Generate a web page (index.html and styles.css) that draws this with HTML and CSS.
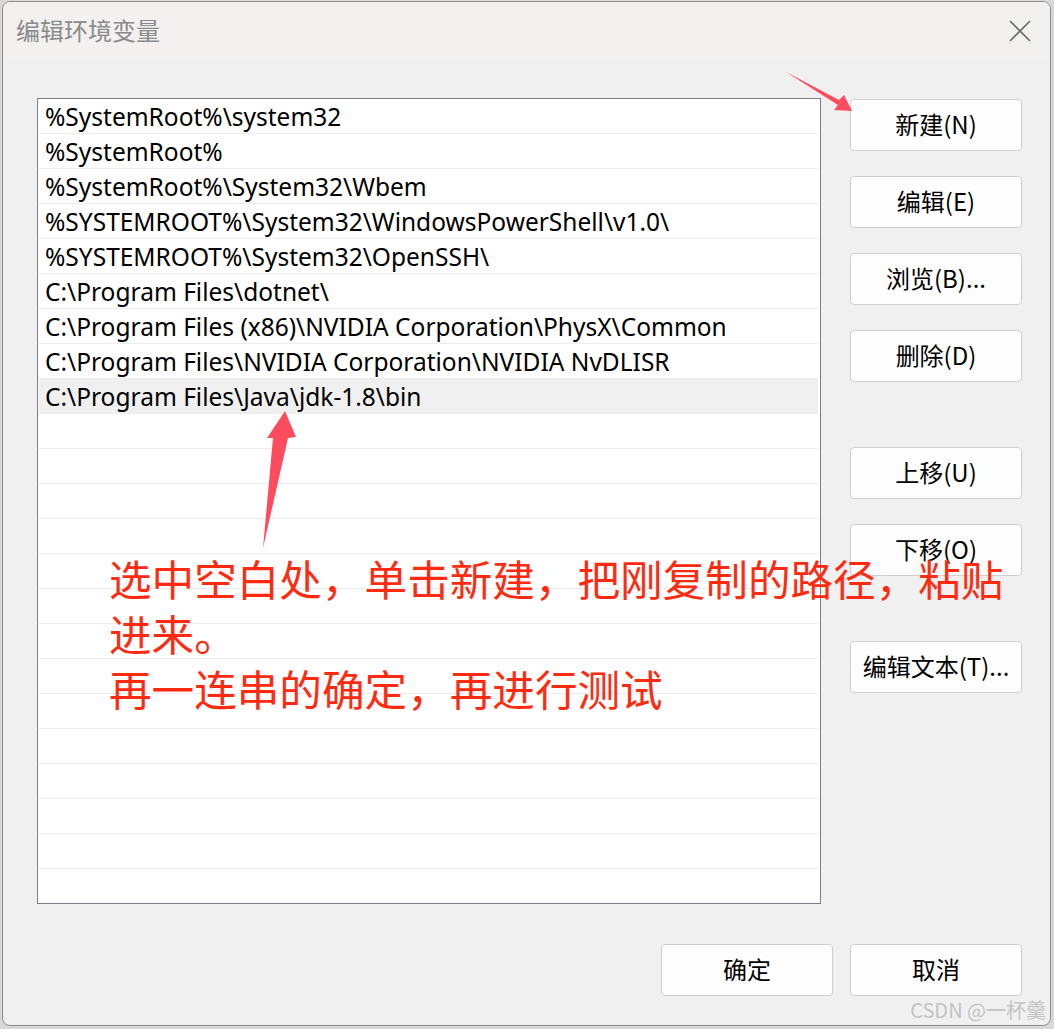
FILE: index.html
```html
<!DOCTYPE html>
<html lang="zh-CN">
<head>
<meta charset="utf-8">
<title>编辑环境变量</title>
<link rel="stylesheet" href="styles.css">
</head>
<body>
<div class="window">
  <div class="titlebar">
    <span class="title">编辑环境变量</span>
    <svg class="close" width="24" height="24" viewBox="0 0 24 24"><path d="M2 2L22 22M22 2L2 22" stroke="#6a6a6a" stroke-width="1.6" fill="none"/></svg>
  </div>
  <div class="content">
    <div class="main">
      <div class="list">
        <div class="row">%SystemRoot%\system32</div>
        <div class="row">%SystemRoot%</div>
        <div class="row">%SystemRoot%\System32\Wbem</div>
        <div class="row">%SYSTEMROOT%\System32\WindowsPowerShell\v1.0\</div>
        <div class="row">%SYSTEMROOT%\System32\OpenSSH\</div>
        <div class="row">C:\Program Files\dotnet\</div>
        <div class="row">C:\Program Files (x86)\NVIDIA Corporation\PhysX\Common</div>
        <div class="row">C:\Program Files\NVIDIA Corporation\NVIDIA NvDLISR</div>
        <div class="row selected">C:\Program Files\Java\jdk-1.8\bin</div>
        <div class="row"></div><div class="row"></div><div class="row"></div>
        <div class="row"></div><div class="row"></div><div class="row"></div>
        <div class="row"></div><div class="row"></div><div class="row"></div>
        <div class="row"></div><div class="row"></div><div class="row"></div>
        <div class="row"></div><div class="row last"></div>
      </div>
      <div class="side">
        <button class="btn">新建(N)</button>
        <button class="btn">编辑(E)</button>
        <button class="btn">浏览(B)...</button>
        <button class="btn">删除(D)</button>
        <button class="btn gap">上移(U)</button>
        <button class="btn">下移(O)</button>
        <button class="btn gap">编辑文本(T)...</button>
      </div>
    </div>
    <div class="footer">
      <button class="btn">确定</button>
      <button class="btn">取消</button>
    </div>
  </div>
  <div class="note">选中空白处，单击新建，把刚复制的路径，粘贴<br>进来。<br>再一连串的确定，再进行测试</div>
  <svg class="arrows" width="1054" height="1029" viewBox="0 0 1054 1029">
    <polygon points="786,72 839,100 844,95 852,111 834,110 838,105" fill="#ff4b5e"/>
    <polygon points="263,548 273,438 267,438 285,411 296,437 288,438" fill="#ff4b5e"/>
  </svg>
  <div class="watermark">CSDN @一杯羹</div>
</div>
</body>
</html>
```
FILE: styles.css
```css
html, body {
  margin: 0;
  padding: 0;
  width: 1054px;
  height: 1029px;
  overflow: hidden;
  background: #d9d9d9;
}
.window {
  position: relative;
  box-sizing: border-box;
  margin: 1px 0 0 2px;
  width: 1049px;
  height: 1025px;
  background: #f0f0f0;
  border: 1px solid #8c8c8c;
  border-radius: 8px;
  overflow: hidden;
  font-family: "Noto Sans", "Noto Sans CJK SC", sans-serif;
}
.titlebar {
  height: 57px;
  background: #f3f0f0;
  display: flex;
  align-items: flex-start;
  justify-content: space-between;
}
.title {
  font-family: "Noto Sans CJK SC", sans-serif;
  font-size: 24px;
  color: #8a8a8a;
  margin: 12px 0 0 13px;
  line-height: 32px;
}
.close {
  margin: 17px 18px 0 0;
}
.content {
  padding: 39px 0 0 34px;
}
.main {
  display: flex;
  align-items: flex-start;
}
.list {
  box-sizing: border-box;
  width: 784px;
  height: 806px;
  background: #fff;
  border: 1px solid #7a7e87;
  overflow: hidden;
  padding: 0 2px 0 1px;
}
.row {
  height: 34px;
  border-bottom: 1px solid #ececec;
  font-size: 24.5px;
  line-height: 35px;
  color: #000;
  padding-left: 6px;
  white-space: nowrap;
}
.row.selected {
  background: #f0f0f0;
}
.side {
  display: flex;
  flex-direction: column;
  gap: 25px;
  margin-left: 29px;
  padding-top: 1px;
}
.btn {
  box-sizing: border-box;
  width: 172px;
  height: 52px;
  background: #fdfdfd;
  border: 1px solid #cfcfcf;
  border-radius: 4px;
  font-family: "Noto Sans CJK SC", sans-serif;
  font-size: 24px;
  color: #000;
  padding: 0 0 4px 0;
  white-space: nowrap;
}
.btn.gap {
  margin-top: 40px;
}
.footer {
  display: flex;
  gap: 17px;
  justify-content: flex-end;
  padding-right: 28px;
  margin-top: 40px;
}
.note {
  position: absolute;
  left: 106px;
  top: 548px;
  font-family: "Noto Sans CJK SC", sans-serif;
  font-size: 42.6px;
  line-height: 55px;
  color: #ff2a10;
  white-space: nowrap;
}
.arrows {
  position: absolute;
  left: -3px;
  top: -2px;
  pointer-events: none;
}
.watermark {
  position: absolute;
  right: 4px;
  bottom: 1px;
  font-family: "Noto Sans CJK SC", sans-serif;
  font-size: 20px;
  color: #c4c4c4;
  white-space: nowrap;
}
```
